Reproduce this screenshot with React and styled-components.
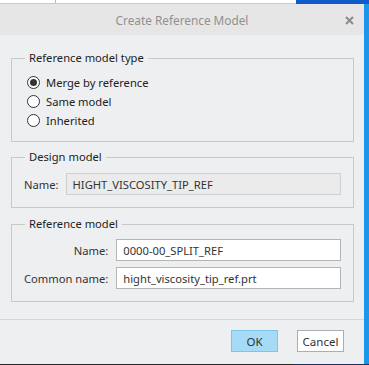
import React from "react";
import styled, { createGlobalStyle } from "styled-components";

const Global = createGlobalStyle`
  html, body {
    margin: 0;
    padding: 0;
    background: #ffffff;
  }
  * {
    box-sizing: border-box;
  }
`;

const Screen = styled.div`
  width: 369px;
  height: 365px;
  display: flex;
  flex-direction: column;
  overflow: hidden;
  font-family: "Noto Sans", "Open Sans", sans-serif;
  font-size: 11.2px;
  color: #222;
`;

const TopStrip = styled.div`
  height: 4px;
  display: flex;
  > div:first-child {
    width: 296px;
    background: #fff;
    border-bottom: 1px solid #c9c9c9;
    position: relative;
  }
  > div:first-child::after {
    content: "";
    position: absolute;
    left: 55px;
    top: 0;
    bottom: 0;
    border-left: 1px solid #b8b8b8;
  }
  > div:last-child {
    flex: 1;
    background: #0f5bc9;
  }
`;

const Middle = styled.div`
  flex: 1;
  display: flex;
`;

const RightEdge = styled.div`
  width: 5px;
  background: #1c95ea;
`;

const BottomStrip = styled.div`
  height: 1px;
  display: flex;
  > div:first-child {
    width: 294px;
    background: #262626;
  }
  > div:last-child {
    flex: 1;
    background: #16315e;
  }
`;

const Dialog = styled.div`
  width: 364px;
  display: flex;
  flex-direction: column;
  background: #eeeff1;
`;

const TitleBar = styled.div`
  height: 31px;
  background: #e6e6e6;
  display: flex;
  align-items: center;
  justify-content: center;
  position: relative;
  color: #909090;
  font-size: 11.8px;
`;

const CloseButton = styled.div`
  position: absolute;
  right: 10px;
  top: 12px;
  width: 9px;
  height: 9px;
  display: flex;
`;

const Body = styled.div`
  padding: 15px 10px 0 11px;
  height: 284px;
  display: flex;
  flex-direction: column;
`;

const Group = styled.fieldset`
  margin: ${(p) => p.$gap || 0}px 0 0 0;
  padding: 0;
  min-width: 0;
  border: 1px solid #c9c9c9;
`;

const Legend = styled.legend`
  margin-left: 13px;
  padding: 0 4px;
  line-height: 16px;
  color: #1e1e1e;
`;

const RadioList = styled.div`
  padding: 7px 0 11px 15px;
  display: flex;
  flex-direction: column;
`;

const RadioRow = styled.div`
  height: 19px;
  display: flex;
  align-items: center;
  gap: 6px;
`;

const RadioCircle = styled.span`
  width: 13px;
  height: 13px;
  border-radius: 50%;
  border: 1px solid #333;
  background: #fff;
  display: flex;
  align-items: center;
  justify-content: center;
  &::after {
    content: "";
    width: 7px;
    height: 7px;
    border-radius: 50%;
    background: ${(p) => (p.$checked ? "#333" : "transparent")};
  }
`;

const FieldGrid = styled.div`
  display: grid;
  grid-template-columns: auto 1fr;
  column-gap: ${(p) => p.$colGap}px;
  row-gap: 6px;
  align-items: center;
  padding: ${(p) => p.$top}px 12px 12px 12px;
`;

const Label = styled.label`
  text-align: right;
  color: #333;
`;

const TextInput = styled.div`
  height: 22px;
  display: flex;
  align-items: center;
  padding: 0 6px;
  border: 1px solid ${(p) => (p.$disabled ? "#cfcfcf" : "#b5b5b5")};
  background: ${(p) => (p.$disabled ? "#ebebeb" : "#ffffff")};
  color: #333;
`;

const Footer = styled.div`
  border-top: 1px solid #d5d5d5;
  display: flex;
  justify-content: flex-end;
  gap: 19px;
  padding: 10px 20px 0 0;
`;

const Button = styled.button`
  width: 47px;
  height: 22px;
  font-family: inherit;
  font-size: 11.5px;
  color: #333;
  padding: 0;
  border: 1px solid ${(p) => (p.$primary ? "#7dc4ec" : "#adadad")};
  background: ${(p) => (p.$primary ? "#a6dbf7" : "#ffffff")};
`;

const options = [
  { label: "Merge by reference", checked: true },
  { label: "Same model" },
  { label: "Inherited" },
];

export default function App() {
  return (
    <Screen>
      <Global />
      <TopStrip>
        <div />
        <div />
      </TopStrip>
      <Middle>
        <Dialog>
          <TitleBar>
            Create Reference Model
            <CloseButton>
              <svg width="9" height="9" viewBox="0 0 9 9">
                <path d="M1 1L8 8M8 1L1 8" stroke="#8c8c8c" strokeWidth="2" />
              </svg>
            </CloseButton>
          </TitleBar>
          <Body>
            <Group>
              <Legend>Reference model type</Legend>
              <RadioList>
                {options.map((o) => (
                  <RadioRow key={o.label}>
                    <RadioCircle $checked={o.checked} />
                    {o.label}
                  </RadioRow>
                ))}
              </RadioList>
            </Group>
            <Group $gap={7}>
              <Legend>Design model</Legend>
              <FieldGrid $top={8} $colGap={7}>
                <Label>Name:</Label>
                <TextInput $disabled>HIGHT_VISCOSITY_TIP_REF</TextInput>
              </FieldGrid>
            </Group>
            <Group $gap={8}>
              <Legend>Reference model</Legend>
              <FieldGrid $top={7} $colGap={8}>
                <Label>Name:</Label>
                <TextInput>0000-00_SPLIT_REF</TextInput>
                <Label>Common name:</Label>
                <TextInput>hight_viscosity_tip_ref.prt</TextInput>
              </FieldGrid>
            </Group>
          </Body>
          <Footer>
            <Button $primary>OK</Button>
            <Button>Cancel</Button>
          </Footer>
        </Dialog>
        <RightEdge />
      </Middle>
      <BottomStrip>
        <div />
        <div />
      </BottomStrip>
    </Screen>
  );
}
